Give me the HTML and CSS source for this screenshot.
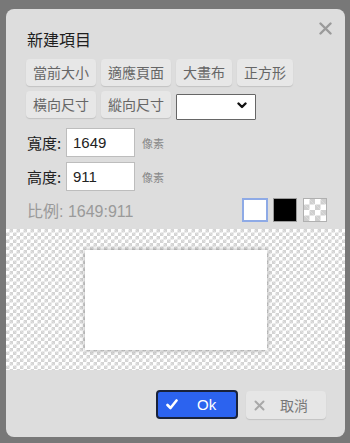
FILE: index.html
```html
<!DOCTYPE html>
<html lang="zh-Hant">
<head>
<meta charset="utf-8">
<title>新建項目</title>
<link rel="stylesheet" href="styles.css">
</head>
<body>
<div class="dialog">
  <div class="head">
    <div class="title">新建項目</div>
    <button class="close" aria-label="close">
      <svg width="13" height="13" viewBox="0 0 13 13"><path d="M1.5 1.5L11.5 11.5M11.5 1.5L1.5 11.5" stroke="#9a9a9a" stroke-width="2.4" stroke-linecap="round"/></svg>
    </button>
  </div>
  <div class="body">
    <div class="row">
      <button class="btn">當前大小</button>
      <button class="btn">適應頁面</button>
      <button class="btn">大畫布</button>
      <button class="btn">正方形</button>
    </div>
    <div class="row">
      <button class="btn">橫向尺寸</button>
      <button class="btn">縱向尺寸</button>
      <div class="select-wrap">
        <select class="select"><option></option></select>
        <svg class="chev" width="10" height="7" viewBox="0 0 10 7"><path d="M1.5 1.5L5 5L8.5 1.5" fill="none" stroke="#111" stroke-width="2.4" stroke-linecap="round" stroke-linejoin="round"/></svg>
      </div>
    </div>
    <div class="fields">
      <div class="field">
        <span class="label">寬度:</span>
        <input class="num" value="1649">
        <span class="unit">像素</span>
      </div>
      <div class="field">
        <span class="label">高度:</span>
        <input class="num" value="911">
        <span class="unit">像素</span>
      </div>
    </div>
    <div class="ratio-row">
      <span class="ratio">比例: 1649:911</span>
      <div class="swatches">
        <span class="sw sw-white"></span>
        <span class="sw sw-black"></span>
        <span class="sw sw-trans"></span>
      </div>
    </div>
  </div>
  <div class="preview">
    <div class="canvas"></div>
  </div>
  <div class="footer">
    <button class="ok">
      <svg width="12" height="11" viewBox="0 0 12 11"><path d="M1.5 6L4.5 9L10.5 1.5" fill="none" stroke="#fff" stroke-width="2.6" stroke-linecap="round" stroke-linejoin="round"/></svg>
      <span>Ok</span>
    </button>
    <button class="cancel">
      <svg width="11" height="11" viewBox="0 0 11 11"><path d="M1.5 1.5L9.5 9.5M9.5 1.5L1.5 9.5" stroke="#a8a8a8" stroke-width="2" stroke-linecap="round"/></svg>
      <span>取消</span>
    </button>
  </div>
</div>
</body>
</html>
```

FILE: styles.css
```css
* { box-sizing: border-box; }
html, body { margin: 0; padding: 0; }
body {
  width: 350px;
  height: 443px;
  background: #787878;
  font-family: "Noto Sans CJK TC", "Liberation Sans", sans-serif;
  overflow: hidden;
}
.dialog {
  position: relative;
  margin: 9px 0 0 6px;
  width: 339px;
  height: 428px;
  background: #dddddd;
  border-radius: 8px;
  display: flex;
  flex-direction: column;
  overflow: hidden;
}
.head {
  padding: 19px 21px 0 21px;
  height: 49px;
}
.title {
  font-size: 16px;
  line-height: 22px;
  color: #1e1e1e;
}
.close {
  position: absolute;
  top: 13px;
  right: 13px;
  width: 13px;
  height: 13px;
  padding: 0;
  border: 0;
  background: none;
  display: flex;
}
.body {
  padding: 1px 18px 0 20px;
  display: flex;
  flex-direction: column;
}
.row {
  display: flex;
  gap: 5px;
  margin-bottom: 5px;
}
.btn {
  height: 27px;
  padding: 0 7px;
  border: 0;
  border-radius: 4px;
  background: #e7e7e7;
  box-shadow: 0 1px 1px rgba(0,0,0,0.12);
  font-family: "Noto Sans CJK TC", sans-serif;
  font-size: 14px;
  color: #666;
  line-height: 27px;
}
.select-wrap {
  position: relative;
  width: 80px;
  height: 26px;
  margin-top: 1px;
}
.select {
  appearance: none;
  -webkit-appearance: none;
  width: 100%;
  height: 100%;
  background: #fff;
  border: 1px solid #666;
  border-radius: 1px;
}
.chev {
  position: absolute;
  right: 9px;
  top: 10px;
}
.fields {
  display: flex;
  flex-direction: column;
  gap: 5px;
  margin-top: 5px;
}
.field {
  display: flex;
  align-items: center;
  height: 29px;
}
.label {
  width: 40px;
  font-size: 15px;
  color: #222;
  padding-left: 1px;
}
.num {
  width: 69px;
  height: 29px;
  border: 1px solid #bdbdbd;
  background: #fff;
  padding: 0 6px;
  font-family: "Liberation Sans", sans-serif;
  font-size: 15px;
  color: #222;
  outline: none;
}
.unit {
  margin-left: 7px;
  font-size: 11px;
  color: #888;
}
.ratio-row {
  display: flex;
  align-items: center;
  justify-content: space-between;
  margin-top: 7px;
  height: 24px;
}
.ratio {
  font-family: "Liberation Sans", "Noto Sans CJK TC", sans-serif;
  font-size: 16px;
  color: #9a9a9a;
  padding-left: 1px;
}
.swatches {
  display: flex;
  gap: 4px;
}
.sw {
  display: block;
  width: 24px;
  height: 24px;
}
.sw-white {
  width: 26px;
  background: #fff;
  border: 2px solid #8eaae6;
}
.sw-black {
  background: #000;
  border: 1px solid #9a9a9a;
  margin-left: 1px;
}
.sw-trans {
  margin-left: 2px;
  border: 1px solid #b0b0b0;
  background-color: #fff;
  background-image:
    linear-gradient(45deg, #cfcfcf 25%, transparent 25%, transparent 75%, #cfcfcf 75%),
    linear-gradient(45deg, #cfcfcf 25%, transparent 25%, transparent 75%, #cfcfcf 75%);
  background-size: 11px 11px;
  background-position: 0 0, 5.5px 5.5px;
}
.preview {
  margin-top: 7px;
  height: 141px;
  display: flex;
  align-items: center;
  justify-content: center;
  background-color: #fff;
  background-image:
    linear-gradient(45deg, #d4d4d4 25%, transparent 25%, transparent 75%, #d4d4d4 75%),
    linear-gradient(45deg, #d4d4d4 25%, transparent 25%, transparent 75%, #d4d4d4 75%);
  background-size: 7px 7px;
  background-position: 0 0, 3.5px 3.5px;
}
.canvas {
  width: 182px;
  height: 100px;
  background: #fff;
  box-shadow: 0 0 5px rgba(0,0,0,0.35);
  margin-left: 1px;
}
.footer {
  display: flex;
  justify-content: flex-end;
  gap: 8px;
  padding: 20px 19px 0 0;
}
.ok {
  width: 82px;
  height: 29px;
  border: 2px solid #19223a;
  border-radius: 4px;
  background: #2c63ef;
  display: flex;
  align-items: center;
  padding: 0 0 0 8px;
  color: #fff;
  font-family: "Liberation Sans", sans-serif;
  font-size: 15px;
}
.ok span {
  margin-left: 19px;
}
.cancel {
  width: 80px;
  height: 28px;
  margin-top: 1px;
  border: 0;
  border-radius: 4px;
  background: #e6e6e6;
  box-shadow: 0 1px 1px rgba(0,0,0,0.12);
  display: flex;
  align-items: center;
  padding: 0 0 0 8px;
  color: #777;
  font-family: "Noto Sans CJK TC", sans-serif;
  font-size: 14px;
}
.cancel span {
  margin-left: 15px;
}
```
